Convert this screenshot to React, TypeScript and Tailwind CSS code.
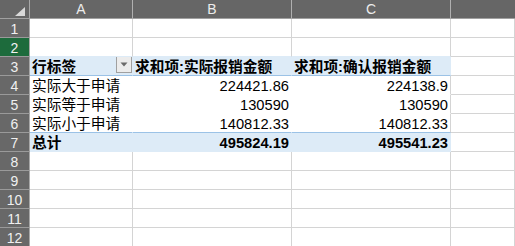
import React from "react";

const BLUE_BG = "#ddebf7";

type CellSpec = {
  text?: string;
  align?: "left" | "right";
  bold?: boolean;
  bg?: string;
  br?: string;
  bb?: string;
  dropdown?: boolean;
};

const widths = [103, 159, 159];

function Row({ n, cells, selected }: { n: number; cells: CellSpec[]; selected?: boolean }) {
  return (
    <div className="flex h-[19px]">
      <div
        className={`w-[30px] shrink-0 h-[19px] box-border border-r border-b border-r-[#a8a8a8] border-b-[#9a9a9a] flex items-center justify-center text-[14px] leading-[18px] ${
          selected ? "bg-[#1d6b3c] text-[#f2f2f2]" : "bg-[#686868] text-[#f0f0f0]"
        }`}
      >
        <span className="pt-[1px]">{n}</span>
      </div>
      {cells.map((c, i) => (
        <div
          key={i}
          className={`h-[19px] box-border border-r border-b flex items-start overflow-hidden whitespace-nowrap text-[14.7px] leading-[18px] text-black ${
            i === 3 ? "flex-1 min-w-0" : "shrink-0"
          } ${c.align === "right" ? "justify-end pr-[2px]" : "justify-between pl-[2px]"} ${
            c.bold ? "font-bold" : "font-normal"
          }`}
          style={{
            width: i < 3 ? widths[i] : undefined,
            backgroundColor: c.bg ?? "#ffffff",
            borderRightColor: c.br ?? "#d4d4d4",
            borderBottomColor: c.bb ?? "#d4d4d4",
          }}
        >
          {c.text !== undefined && <span className="pt-[1px]">{c.text}</span>}
          {c.dropdown && (
            <div className="w-[16px] h-[17px] mr-[0px] mt-[-1px] box-border border border-[#a0a0a0] bg-[#ececec] flex items-center justify-center">
              <svg width="8" height="5" viewBox="0 0 8 5">
                <polygon points="0.5,0.5 7.5,0.5 4,4.5" fill="#6a6a6a" />
              </svg>
            </div>
          )}
        </div>
      ))}
    </div>
  );
}

export default function App() {
  const empty: CellSpec[] = [{}, {}, {}, {}];
  const blankPivotAbove: CellSpec[] = [{ bb: BLUE_BG }, { bb: BLUE_BG }, { bb: BLUE_BG }, {}];

  const header: CellSpec[] = [
    { text: "行标签", bold: true, bg: BLUE_BG, br: BLUE_BG, bb: "#9bc2e6", dropdown: true },
    { text: "求和项:实际报销金额", bold: true, bg: BLUE_BG, br: BLUE_BG, bb: "#9bc2e6" },
    { text: "求和项:确认报销金额", bold: true, bg: BLUE_BG, br: BLUE_BG, bb: "#9bc2e6" },
    {},
  ];
  const dataRow = (label: string, b: string, c: string, last?: boolean): CellSpec[] => [
    { text: label, br: "#ffffff", bb: last ? "#9bc2e6" : "#ffffff" },
    { text: b, align: "right", br: "#ffffff", bb: last ? "#9bc2e6" : "#ffffff" },
    { text: c, align: "right", bb: last ? "#9bc2e6" : "#ffffff" },
    {},
  ];
  const total: CellSpec[] = [
    { text: "总计", bold: true, bg: BLUE_BG, br: BLUE_BG, bb: BLUE_BG },
    { text: "495824.19", bold: true, align: "right", bg: BLUE_BG, br: BLUE_BG, bb: BLUE_BG },
    { text: "495541.23", bold: true, align: "right", bg: BLUE_BG, br: BLUE_BG, bb: BLUE_BG },
    {},
  ];

  return (
    <div
      className="w-[515px] h-[246px] overflow-hidden bg-white"
      style={{ fontFamily: '"Liberation Sans", "Noto Sans CJK SC", sans-serif' }}
    >
      {/* column header */}
      <div className="flex h-[19px] bg-[#666666]">
        <div className="w-[30px] shrink-0 h-[19px] box-border border-r border-b border-r-[#a8a8a8] border-b-[#a0a0a0] relative">
          <svg className="absolute left-[15px] top-[7px]" width="10" height="9" viewBox="0 0 10 9">
            <polygon points="10,0 10,9 0,9" fill="#d9d9d9" />
          </svg>
        </div>
        {["A", "B", "C"].map((l, i) => (
          <div
            key={l}
            className="shrink-0 h-[19px] box-border border-r border-b border-r-[#b0b0b0] border-b-[#a0a0a0] flex items-center justify-center text-[14px] leading-[18px] text-[#ececec]"
            style={{ width: widths[i] }}
          >
            {l}
          </div>
        ))}
        <div className="flex-1 h-[19px] box-border border-b border-b-[#a0a0a0]" />
      </div>
      <Row n={1} cells={empty} />
      <Row n={2} cells={blankPivotAbove} selected />
      <Row n={3} cells={header} />
      <Row n={4} cells={dataRow("实际大于申请", "224421.86", "224138.9")} />
      <Row n={5} cells={dataRow("实际等于申请", "130590", "130590")} />
      <Row n={6} cells={dataRow("实际小于申请", "140812.33", "140812.33", true)} />
      <Row n={7} cells={total} />
      <Row n={8} cells={empty} />
      <Row n={9} cells={empty} />
      <Row n={10} cells={empty} />
      <Row n={11} cells={empty} />
      <Row n={12} cells={empty} />
    </div>
  );
}
